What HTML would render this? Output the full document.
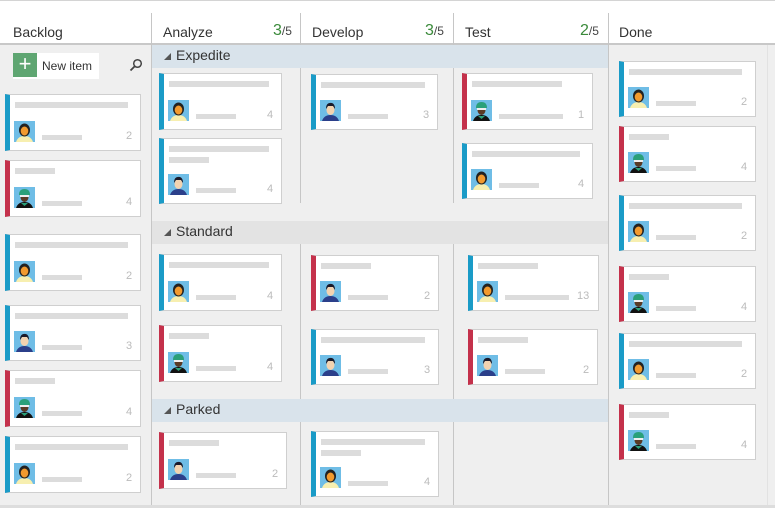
<!DOCTYPE html><html><head><meta charset="utf-8"><style>
*{margin:0;padding:0;box-sizing:border-box}
body{width:775px;height:508px;overflow:hidden;background:#efefef;font-family:"Segoe UI","Liberation Sans",sans-serif;position:relative}
.a{position:absolute}
.hdr{left:0;top:0;width:775px;height:43px;background:#fff;border-top:1px solid #d4d4d4}
.ht{font-size:14px;color:#333;top:24px}
.cnt{font-size:16px;color:#3a8a3a;top:22px}
.cnt span{font-size:12px;color:#444}
.vl{width:1px;background:#c6c6c6}
.lane{height:23px;font-size:14px;color:#333;padding-left:24px;line-height:21px}
.lane:before{content:"";position:absolute;left:12px;top:8px;border-left:7px solid transparent;border-bottom:7px solid #555}
.card{background:#fff;border:1px solid #cfcfcf;border-left:5px solid #1a9bc7}
.card.r{border-left-color:#c4314b}
.bar{position:absolute;height:6px;background:#dcdcdc}
.num{position:absolute;font-size:11px;color:#bbb}
.av{position:absolute;width:21px;height:21px;background:#6fbde6;overflow:hidden}
</style></head><body>
<div class="a hdr"></div>
<div class="a" style="left:0;top:43px;width:775px;height:2px;background:#c8c8c8"></div>
<div class="a ht" style="left:13px">Backlog</div>
<div class="a ht" style="left:163px">Analyze</div>
<div class="a cnt" style="left:273px">3<span>/5</span></div>
<div class="a ht" style="left:312px">Develop</div>
<div class="a cnt" style="left:425px">3<span>/5</span></div>
<div class="a ht" style="left:465px">Test</div>
<div class="a cnt" style="left:580px">2<span>/5</span></div>
<div class="a ht" style="left:619px">Done</div>
<div class="a vl" style="left:151px;top:13px;height:492px"></div>
<div class="a vl" style="left:300px;top:13px;height:190px"></div>
<div class="a vl" style="left:453px;top:13px;height:190px"></div>
<div class="a vl" style="left:608px;top:13px;height:492px"></div>
<div class="a vl" style="left:300px;top:244px;height:155px"></div>
<div class="a vl" style="left:453px;top:244px;height:155px"></div>
<div class="a vl" style="left:300px;top:421px;height:84px"></div>
<div class="a vl" style="left:453px;top:421px;height:84px"></div>
<div class="a vl" style="left:767px;top:45px;height:460px;background:#e2e2e2"></div>
<div class="a" style="left:0;top:505px;width:775px;height:3px;background:#ddd"></div>
<div class="a lane" style="left:152px;top:45px;width:456px;background:#d9e3eb">Expedite</div>
<div class="a lane" style="left:152px;top:221px;width:456px;background:#e3e3e3">Standard</div>
<div class="a lane" style="left:152px;top:399px;width:456px;background:#d9e3eb">Parked</div>
<div class="a" style="left:13px;top:53px;width:86px;height:26px;background:#fff"></div>
<div class="a" style="left:13px;top:53px;width:24px;height:24px;background:#5fa672;color:#fff;font-size:22px;line-height:22px;text-align:center">+</div>
<div class="a" style="left:42px;top:59px;font-size:12px;color:#333">New item</div>
<svg class="a" style="left:129px;top:58px" width="14" height="14"><circle cx="8.5" cy="5.5" r="3.8" fill="none" stroke="#444" stroke-width="1.5"/><line x1="6" y1="8" x2="1.5" y2="12.5" stroke="#444" stroke-width="1.8"/></svg>
<div id="b"></div>
<script>
var C=[
[5,94,136,57,0,'w',113,0,2],[5,160,136,57,1,'d',40,0,4],[5,234,136,57,0,'w',113,0,2],[5,305,136,56,0,'m',113,0,3],[5,370,136,57,1,'d',40,0,4],[5,436,136,57,0,'w',113,0,2],
[159,73,123,57,0,'w',100,0,4],[159,138,123,66,0,'m',100,40,4],[159,254,123,57,0,'w',100,0,4],[159,325,123,57,1,'d',40,0,4],[159,432,128,57,1,'m',50,0,2],
[311,74,127,56,0,'m',104,0,3],[311,255,128,56,1,'m',50,0,2],[311,329,128,56,0,'m',104,0,3],[311,431,128,66,0,'w',104,40,4],
[462,73,131,57,1,'d',90,0,1],[462,143,131,56,0,'w',108,0,4],[468,255,131,56,0,'w',60,0,13],[468,329,130,56,1,'m',50,0,2],
[619,61,137,56,0,'w',113,0,2],[619,126,137,56,1,'d',40,0,4],[619,195,137,56,0,'w',113,0,2],[619,266,137,56,1,'d',40,0,4],[619,333,137,56,0,'w',113,0,2],[619,404,137,56,1,'d',40,0,4]];
function av(t){
if(t=='w')return '<svg width="21" height="21"><rect width="21" height="21" fill="#6fbde6"/><path d="M2 21 Q4 15 10.5 15 Q17 15 19 21Z" fill="#f7efb0"/><ellipse cx="10.5" cy="9" rx="5.5" ry="6.5" fill="#222"/><ellipse cx="10.5" cy="10" rx="3.8" ry="4.5" fill="#f29a2e"/></svg>';
if(t=='m')return '<svg width="21" height="21"><rect width="21" height="21" fill="#6fbde6"/><path d="M2 21 Q4 15 10.5 15 Q17 15 19 21Z" fill="#2b3f8a"/><ellipse cx="10.5" cy="10" rx="4" ry="5" fill="#f3d3b0"/><path d="M6 9 Q6 2 12 3 Q15 4 15 9 L13 6 L8 6Z" fill="#1a1a2a"/></svg>';
return '<svg width="21" height="21"><rect width="21" height="21" fill="#6fbde6"/><path d="M2 21 Q4 15 10.5 15 Q17 15 19 21Z" fill="#111"/><path d="M7 16 L10.5 19 L14 16Z" fill="#2aa07a"/><ellipse cx="10.5" cy="10" rx="4" ry="5" fill="#5a3a25"/><path d="M5 8 Q5 2 10.5 2 Q16 2 16 8Z" fill="#2aa07a"/><rect x="6" y="8" width="9" height="2" fill="#eee"/></svg>';}
var h='';C.forEach(function(c){var x=c[0],y=c[1],w=c[2],ht=c[3];
h+='<div class="a card'+(c[4]?' r':'')+'" style="left:'+x+'px;top:'+y+'px;width:'+w+'px;height:'+ht+'px"></div>';
h+='<div class="bar" style="left:'+(x+10)+'px;top:'+(y+8)+'px;width:'+c[6]+'px"></div>';
if(c[7])h+='<div class="bar" style="left:'+(x+10)+'px;top:'+(y+19)+'px;width:'+c[7]+'px"></div>';
var ay=y+ht-30;
h+='<div class="av" style="left:'+(x+9)+'px;top:'+ay+'px">'+av(c[5])+'</div>';
var bw=c[8]==13||c[8]==1?64:40;
h+='<div class="bar" style="left:'+(x+37)+'px;top:'+(ay+14)+'px;width:'+bw+'px;height:5px"></div>';
h+='<div class="num" style="left:'+(x+w-(c[8]>9?22:15))+'px;top:'+(ay+9)+'px">'+c[8]+'</div>';});
document.getElementById('b').innerHTML=h;
</script>
</body></html>
